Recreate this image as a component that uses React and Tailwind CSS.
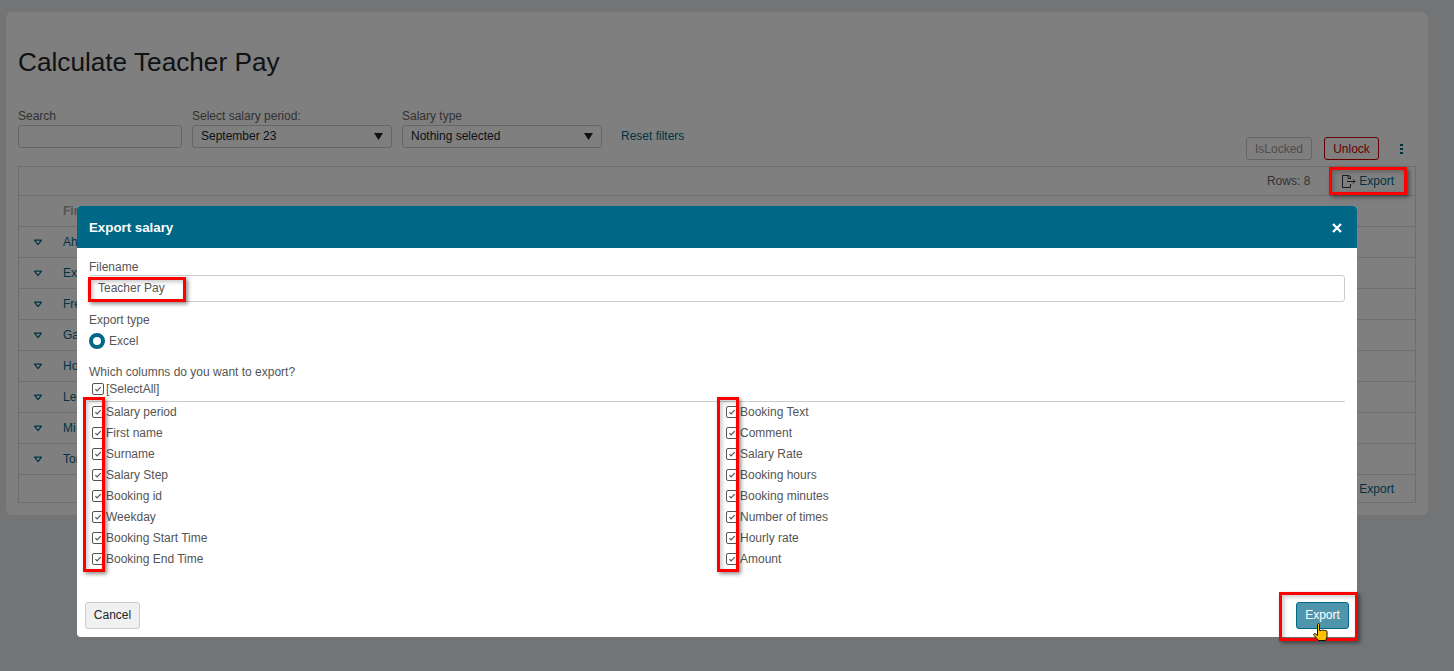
import { useState } from "react";

const leftColumns = ["Salary period", "First name", "Surname", "Salary Step", "Booking id", "Weekday", "Booking Start Time", "Booking End Time"];
const rightColumns = ["Booking Text", "Comment", "Salary Rate", "Booking hours", "Booking minutes", "Number of times", "Hourly rate", "Amount"];
const rows = ["Ah", "Ex", "Fre", "Ga", "Ho", "Le", "Mi", "Tor"];

const CaretDown = () => (
  <svg width="9" height="7" viewBox="0 0 9 7">
    <path d="M0 0h9L4.5 7z" fill="#222" />
  </svg>
);

const RowToggle = () => (
  <svg width="10" height="7" viewBox="0 0 10 7" fill="none">
    <path d="M1.5 1.2h7L5 5.6z" stroke="#006786" strokeWidth="1.2" strokeLinejoin="round" />
  </svg>
);

const ExportIcon = () => (
  <svg width="15" height="13" viewBox="0 0 15 13" fill="none" stroke="#333" strokeWidth="1">
    <path d="M9.5 4V1.5L7.5.5H1.5v12h8V9" />
    <path d="M7 .5v3h2.5" />
    <path d="M6 6.5h8M12 4.5l2 2-2 2" />
  </svg>
);

const Check = ({ checked, onClick }) => (
  <button
    type="button"
    onClick={onClick}
    className="w-3 h-3 shrink-0 rounded-[2px] border border-[#555] bg-white flex items-center justify-center"
  >
    {checked && (
      <svg width="8" height="8" viewBox="0 0 8 8" fill="none">
        <path d="M1.4 4.2l1.7 1.7L6.7 2.1" stroke="#555" strokeWidth="1.2" />
      </svg>
    )}
  </button>
);

const ColumnRow = ({ label }) => {
  const [checked, setChecked] = useState(true);
  return (
    <div className="h-[21px] flex items-center pl-[3px]">
      <Check checked={checked} onClick={() => setChecked(!checked)} />
      <span className="ml-[2px] text-xs text-[#555]">{label}</span>
    </div>
  );
};

const Callout = ({ className }) => (
  <div className={`absolute border-[3px] border-[#ff0000] shadow-[2px_2px_4px_rgba(0,0,0,0.45),inset_2px_2px_4px_rgba(0,0,0,0.22)] pointer-events-none ${className}`} />
);

export default function App() {
  return (
    <div className="relative h-[671px] overflow-hidden bg-[#e7e9eb] font-['Liberation_Sans',Arial,sans-serif]">
      {/* Page behind the dialog */}
      <div className="ml-[6px] mr-[26px] mt-3 h-[503px] rounded-md bg-white px-3 pt-[35px]">
        <h1 className="text-[26.2px] leading-[30px] text-[#212529]">Calculate Teacher Pay</h1>

        <div className="mt-[31px] flex h-[52px]">
          <div className="w-[164px]">
            <div className="text-xs leading-[16px] text-[#666]">Search</div>
            <div className="mt-[1px] h-[23px] rounded-[3px] border border-[#ccc]" />
          </div>
          <div className="ml-[10px] w-[200px]">
            <div className="text-xs leading-[16px] text-[#666]">Select salary period:</div>
            <div className="mt-[1px] h-[23px] rounded-[3px] border border-[#ccc] px-2 pb-px flex items-center justify-between text-xs text-[#212529]">
              September 23
              <CaretDown />
            </div>
          </div>
          <div className="ml-[10px] w-[200px]">
            <div className="text-xs leading-[16px] text-[#666]">Salary type</div>
            <div className="mt-[1px] h-[23px] rounded-[3px] border border-[#ccc] px-2 pb-px flex items-center justify-between text-xs text-[#212529]">
              Nothing selected
              <CaretDown />
            </div>
          </div>
          <div className="ml-[19px] mt-[20px] text-xs text-[#006786]">Reset filters</div>
          <div className="ml-auto mr-[13px] mt-[29px] flex items-center h-[23px]">
            <div className="w-[66px] h-[23px] rounded-[3px] border border-[#ccc] flex items-center justify-center text-xs text-[#999]">IsLocked</div>
            <div className="ml-3 w-[55px] h-[23px] rounded-[3px] border border-[#c00] flex items-center justify-center text-xs text-[#c00]">Unlock</div>
            <div className="ml-[21px] flex flex-col gap-[2px]">
              <span className="w-[3px] h-[2px] bg-[#006786]" />
              <span className="w-[3px] h-[2px] bg-[#006786]" />
              <span className="w-[3px] h-[2px] bg-[#006786]" />
            </div>
          </div>
        </div>

        <div className="mt-[6px] h-[337px] border border-[#ddd] text-xs">
          <div className="h-[29px] border-b border-[#ddd] flex items-center justify-end pr-[21px]">
            <span className="mr-[31px] text-[#666]">Rows: 8</span>
            <ExportIcon />
            <span className="ml-[3px] text-[#006786]">Export</span>
          </div>
          <div className="h-[31px] border-b border-[#ddd] flex items-center pl-[44px] font-bold text-[#aaa]">First name</div>
          {rows.map((name) => (
            <div key={name} className="h-[31px] border-b border-[#ddd] flex items-center pl-[14px]">
              <RowToggle />
              <span className="ml-[20px] text-[#006786]">{name}</span>
            </div>
          ))}
          <div className="h-[28px] flex items-center justify-end pr-[21px] text-[#006786]">Export</div>
        </div>
      </div>

      {/* Backdrop */}
      <div className="absolute inset-0 bg-black/50" />

      {/* Export dialog */}
      <div className="absolute left-[77px] top-[206px] w-[1280px] h-[431px] rounded-[4px] bg-white flex flex-col overflow-hidden">
        <div className="h-[42px] shrink-0 bg-[#006786] px-3 pt-px flex items-center justify-between">
          <span className="text-[13.3px] font-bold text-white">Export salary</span>
          <svg width="10" height="10" viewBox="0 0 10 10" className="mr-[3px]">
            <path d="M1 1l8 8M9 1l-8 8" stroke="#fff" strokeWidth="2.2" />
          </svg>
        </div>

        <div className="flex-1 px-3 pt-[12px] text-xs text-[#555]">
          <div className="leading-[14px]">Filename</div>
          <div className="mt-[1px] h-[27px] rounded-[3px] border border-[#ccc] px-2 pb-[2px] flex items-center">Teacher Pay</div>

          <div className="mt-[11px] leading-[14px]">Export type</div>
          <div className="mt-[6px] h-[16px] flex items-center">
            <span className="w-4 h-4 rounded-full border-[4px] border-[#006786] bg-white" />
            <span className="ml-1">Excel</span>
          </div>

          <div className="mt-[16px] leading-[14px]">Which columns do you want to export?</div>
          <div className="mt-[1px] h-[18px] flex items-center pl-[3px]">
            <Check checked />
            <span className="ml-[2px]">[SelectAll]</span>
          </div>
          <div className="border-t border-[#ccc] mt-[3px]" />

          <div className="grid grid-cols-[634px_1fr] -mt-px">
            <div>
              {leftColumns.map((label) => (
                <ColumnRow key={label} label={label} />
              ))}
            </div>
            <div>
              {rightColumns.map((label) => (
                <ColumnRow key={label} label={label} />
              ))}
            </div>
          </div>
        </div>

        <div className="h-[35px] shrink-0 pl-2 pr-2 flex justify-between items-start">
          <button type="button" className="w-[55px] h-[27px] rounded-[3px] border border-[#ccc] bg-[#f0f0f0] pb-[2px] text-xs text-[#212529]">Cancel</button>
          <button type="button" className="w-[53px] h-[27px] rounded-[3px] border border-[#006786] bg-[#4f96ad] pb-[2px] text-xs text-white">Export</button>
        </div>
      </div>

      {/* Red annotation boxes */}
      <Callout className="left-[1329px] top-[167px] w-[78px] h-[28px]" />
      <Callout className="left-[88px] top-[277px] w-[98px] h-[25px]" />
      <Callout className="left-[83px] top-[397px] w-[22px] h-[175px]" />
      <Callout className="left-[717px] top-[397px] w-[22px] h-[175px]" />
      <Callout className="left-[1279px] top-[592px] w-[79px] h-[49px]" />

      {/* Hand cursor */}
      <svg className="absolute left-[1313px] top-[623px]" width="16" height="19" viewBox="0 0 16 19">
        <path
          d="M4.5 1.5c0-1.3 2-1.3 2 0v6l1.5.2c.2-1 1.8-1 2 0 .3-.8 1.8-.8 2 .2.5-.6 2-.4 2 .8v5.3l-1.2 3.5H5.5L1 12.3c-.8-1.3.6-2.3 1.6-1.4l1.9 1.6z"
          fill="#ffc000"
          stroke="#111"
          strokeWidth="1"
        />
      </svg>
    </div>
  );
}
